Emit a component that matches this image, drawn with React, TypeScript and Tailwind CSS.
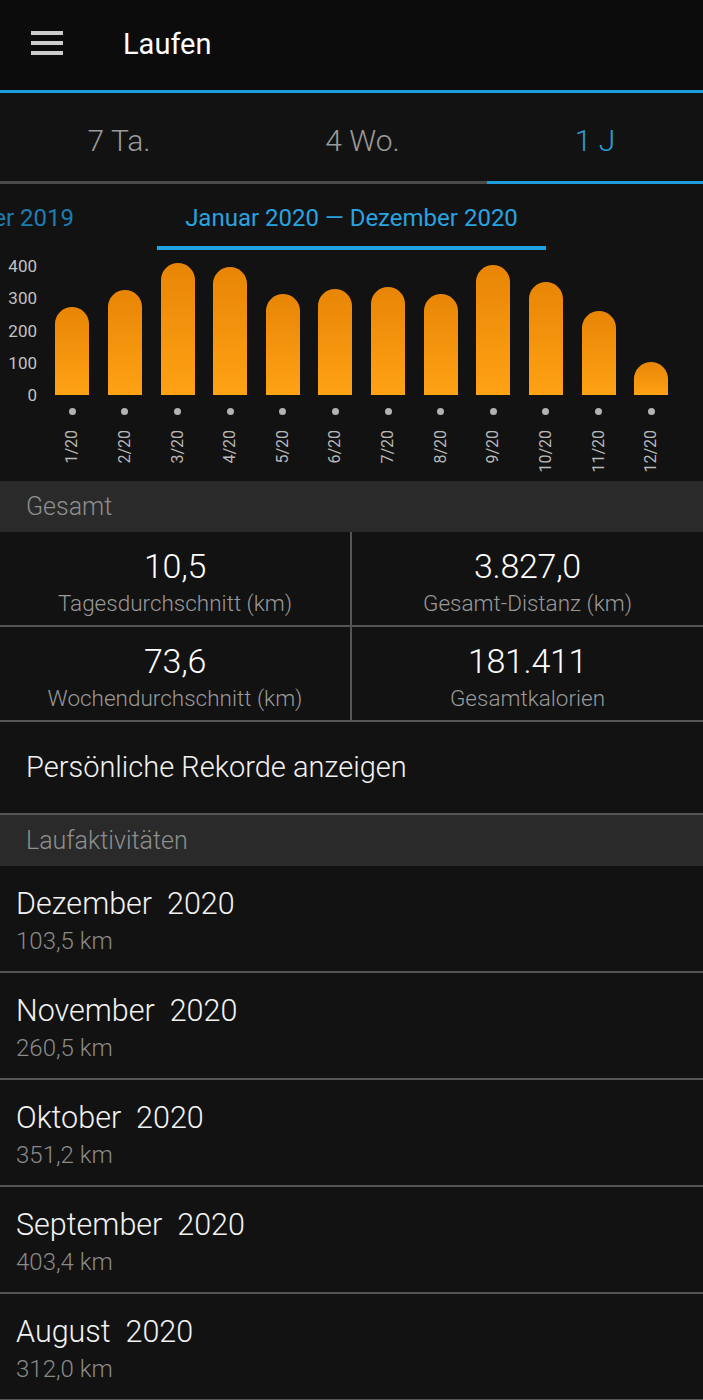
import React from "react";

const bars = [273, 326, 409, 397, 313, 329, 335, 312, 403.4, 351.2, 260.5, 103.5];
const labels = ["1/20", "2/20", "3/20", "4/20", "5/20", "6/20", "7/20", "8/20", "9/20", "10/20", "11/20", "12/20"];
const axis = ["400", "300", "200", "100", "0"];

const stats = [
  { v: "10,5", l: "Tagesdurchschnitt (km)" },
  { v: "3.827,0", l: "Gesamt-Distanz (km)" },
  { v: "73,6", l: "Wochendurchschnitt (km)" },
  { v: "181.411", l: "Gesamtkalorien" },
];

const months = [
  { m: "Dezember", km: "103,5 km" },
  { m: "November", km: "260,5 km" },
  { m: "Oktober", km: "351,2 km" },
  { m: "September", km: "403,4 km" },
  { m: "August", km: "312,0 km" },
];

function Divider() {
  return <div className="h-[2px] bg-[#555555]" />;
}

export default function App() {
  return (
    <div className="w-[703px] h-[1400px] overflow-hidden bg-[#121212] font-['Roboto',sans-serif]">
      {/* App bar */}
      <header className="h-[90px] bg-[#0c0c0c] flex items-center">
        <div className="ml-[31px] w-[32px] flex flex-col gap-[6px] -mt-[5px]">
          <span className="block h-[4px] bg-[#cccccc]" />
          <span className="block h-[4px] bg-[#cccccc]" />
          <span className="block h-[4px] bg-[#cccccc]" />
        </div>
        <h1 className="ml-[60px] text-[29px] leading-none text-white -mt-[2px]">Laufen</h1>
      </header>
      <div className="h-[3px] bg-[#1e9ddd]" />

      {/* Tabs */}
      <div className="h-[88px] flex font-light text-[30px]">
        <div className="w-[238px] flex items-center justify-center pt-[6px] text-[#9a9a9a]">7 Ta.</div>
        <div className="w-[249px] flex items-center justify-center pt-[6px] text-[#9a9a9a]">4 Wo.</div>
        <div className="flex-1 flex items-center justify-center pt-[6px] text-[#2a9fdc]">1 J</div>
      </div>
      <div className="h-[3px] flex">
        <div className="w-[487px] bg-[#4a4a4a]" />
        <div className="flex-1 bg-[#1e9ddd]" />
      </div>

      {/* Date range pager */}
      <div className="relative h-[66px] overflow-hidden">
        <span className="absolute top-[20px] right-[629px] text-[24px] leading-[28px] whitespace-nowrap text-[#1d7db3]">
          Januar 2019 — Dezember 2019
        </span>
        <div className="pt-[20px] text-center text-[24px] leading-[28px] text-[#29a3e0]">
          Januar 2020 — Dezember 2020
        </div>
        <div className="mt-[14px] mx-auto w-[389px] h-[4px] bg-[#1ea3e6]" />
      </div>

      {/* Chart */}
      <div className="h-[231px] flex items-start">
        <div className="w-[46px] pr-[9px] pt-[8px] flex flex-col gap-[16.25px] items-end text-[17px] leading-[16px] text-[#c2c2c2]">
          {axis.map((a) => (
            <span key={a}>{a}</span>
          ))}
        </div>
        <div className="flex">
          {bars.map((b, i) => (
            <div key={i} className="w-[52.64px] flex flex-col items-center">
              <div className="h-[145px] flex items-end">
                <div
                  className="w-[34px] rounded-t-full bg-linear-to-b from-[#e88506] to-[#ffa214]"
                  style={{ height: `${b * 0.3225}px` }}
                />
              </div>
              <div className="mt-[13px] w-[7px] h-[7px] rounded-full bg-[#b3b3b3]" />
              <span className="mt-[15px] text-[16px] leading-[16px] text-[#b8b8b8] [writing-mode:vertical-rl] rotate-180 whitespace-nowrap">
                {labels[i]}
              </span>
            </div>
          ))}
        </div>
      </div>

      {/* Gesamt */}
      <div className="h-[51px] bg-[#2a2a2a] flex items-center pl-[26px] text-[25px] font-light text-[#8f8f8f]">
        Gesamt
      </div>
      <div className="grid grid-cols-[350px_2px_1fr]">
        {[0, 1].map((r) => (
          <React.Fragment key={r}>
            {[0, 1].map((c) => {
              const s = stats[r * 2 + c];
              return (
                <React.Fragment key={c}>
                  {c === 1 && <div className="bg-[#555555]" />}
                  <div className="h-[93px] flex flex-col items-center pt-[14px]">
                    <span className="text-[34px] leading-[40px] font-light text-white tracking-[-0.3px]">{s.v}</span>
                    <span className="mt-[4px] text-[22.5px] leading-[26px] font-light text-[#999999]">{s.l}</span>
                  </div>
                </React.Fragment>
              );
            })}
            <div className="col-span-3 h-[2px] bg-[#555555]" />
          </React.Fragment>
        ))}
      </div>

      <div className="h-[91px] flex items-center pl-[26px] text-[29px] font-light text-[#f2f2f2]">
        Persönliche Rekorde anzeigen
      </div>
      <Divider />

      <div className="h-[51px] bg-[#2a2a2a] flex items-center pl-[26px] text-[25px] font-light text-[#8f8f8f]">
        Laufaktivitäten
      </div>

      {months.map((m) => (
        <React.Fragment key={m.m}>
          <div className="h-[105px] pl-[16px] pt-[20px] flex flex-col">
            <span className="text-[30.5px] leading-[36px] font-light text-[#f2f2f2] whitespace-pre">
              {m.m + "  2020"}
            </span>
            <span className="mt-[5px] text-[24px] leading-[28px] font-light text-[#8a8a8a]">{m.km}</span>
          </div>
          <Divider />
        </React.Fragment>
      ))}
    </div>
  );
}
